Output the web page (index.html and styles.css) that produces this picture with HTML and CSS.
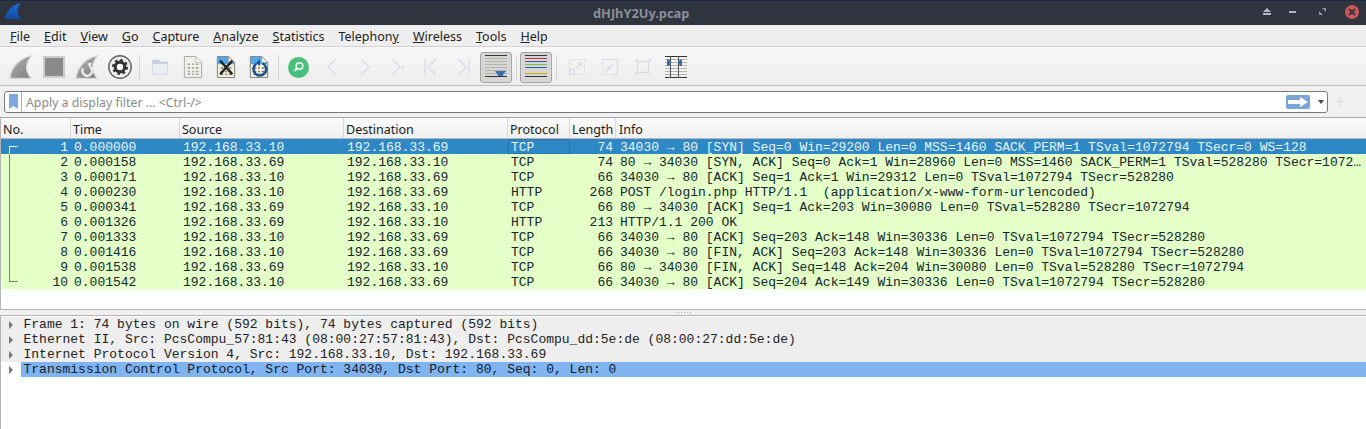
FILE: index.html
```html
<!DOCTYPE html>
<html>
<head>
  <title>dHJhY2Uy.pcap</title>
  <link rel="stylesheet" href="styles.css">
</head>
<body>
  <svg class="sprites" width="0" height="0">
    <defs>
      <linearGradient id="fin" x1="0" y1="0" x2="1" y2="1"><stop offset="0" stop-color="#b2b2b2"/><stop offset="1" stop-color="#7d7d7d"/></linearGradient>
      <linearGradient id="finblue" x1="0" y1="0" x2="0" y2="1"><stop offset="0" stop-color="#1f6fe0"/><stop offset="1" stop-color="#12489c"/></linearGradient>
      <symbol id="doc" viewBox="0 0 22 26">
        <path d="M1.5 1.5H14L20.5 8V24.5H1.5Z" fill="#f1f1ec" stroke="#a0a0a0"/>
        <path d="M14 1.5V8H20.5Z" fill="#fff" stroke="#c0c0c0"/>
        <path d="M5 10h3M10 10h2M14 10h3M5 14h3M10 14h2M14 14h3M5 18h3M10 18h2M14 18h3M5 21h3M10 21h2M14 21h3" stroke="#a5a59c" stroke-width="1.8"/>
      </symbol>
      <symbol id="docblue" viewBox="0 0 22 26">
        <path d="M1.5 1.5H14L20.5 8V24.5H1.5Z" fill="#f2f2d8" stroke="#777"/>
        <path d="M2 2H14V8H20V10H2Z" fill="#55a8e8"/>
        <path d="M14 1.5V8H20.5Z" fill="#fff" stroke="#999"/>
        <path d="M5 14h3M10 14h2M14 14h3M5 18h3M10 18h2M14 18h3M5 21h3M10 21h2M14 21h3" stroke="#77776a" stroke-width="1.6"/>
      </symbol>
    </defs>
  </svg>

  <header class="titlebar">
    <svg class="app-logo" width="17" height="16" viewBox="0 0 17 16">
      <path d="M0 16C1 8 7 2 15.500 0C12 5 11 11 16.500 16Z" fill="url(#finblue)"/>
    </svg>
    <span class="window-title">dHJhY2Uy.pcap</span>
    <div class="window-controls">
      <svg class="ctl-eject" width="8" height="7" viewBox="0 0 8 7"><path d="M4 0L8 4H0Z M0 5H8V7H0Z" fill="#b6bac4"/></svg>
      <span class="ctl-min"></span>
      <svg class="ctl-max" width="7" height="7" viewBox="0 0 7 7"><path d="M3 0H7V4Z M0 3L4 7H0Z" fill="#8f939e"/></svg>
      <span class="ctl-close">
        <svg width="8" height="8" viewBox="0 0 8 8"><path d="M1 1L7 7M7 1L1 7" stroke="#2f343f" stroke-width="1.8"/></svg>
      </span>
    </div>
  </header>

  <nav class="menubar">
    <span><u>F</u>ile</span>
    <span><u>E</u>dit</span>
    <span><u>V</u>iew</span>
    <span><u>G</u>o</span>
    <span><u>C</u>apture</span>
    <span><u>A</u>nalyze</span>
    <span><u>S</u>tatistics</span>
    <span>Telephon<u>y</u></span>
    <span><u>W</u>ireless</span>
    <span><u>T</u>ools</span>
    <span><u>H</u>elp</span>
  </nav>

  <div class="toolbar">
    <div class="tool"><svg width="24" height="24" viewBox="0 0 24 24"><path d="M1 23.500C2 12 11 3 22.500 .8C16.500 8 15.500 16 22.500 23.500Z" fill="url(#fin)" stroke="#d8d8d8" stroke-width="1.300"/></svg></div>
    <div class="tool"><svg width="22" height="22" viewBox="0 0 22 22"><rect x="1" y="1" width="20" height="20" fill="#8a8a8a" stroke="#cdcdcd" stroke-width="2"/></svg></div>
    <div class="tool"><svg width="24" height="24" viewBox="0 0 24 24"><path d="M1 23.500C2 12 11 3 22.500 .8C16.500 8 15.500 16 22.500 23.500Z" fill="url(#fin)" stroke="#d8d8d8" stroke-width="1.300"/><path d="M8 13.500A4.800 4.800 0 1 0 15 12" fill="none" stroke="#eee" stroke-width="2.400"/><path d="M12 8.500l4.500-1-1 6Z" fill="#eee"/></svg></div>
    <div class="tool"><svg width="24" height="24" viewBox="0 0 24 24"><circle cx="12" cy="12" r="11.200" fill="#efefef" stroke="#666" stroke-width="1.400"/><circle cx="12" cy="12" r="4.800" fill="#fff" stroke="#333" stroke-width="3.200"/><circle cx="12" cy="12" r="7" fill="none" stroke="#333" stroke-width="2" stroke-dasharray="2.750 2.750"/></svg></div>
    <div class="sep"></div>
    <div class="tool"><svg width="16" height="16" viewBox="0 0 16 16"><path d="M.5 1H7L8 3H15.500V15.500H.5Z" fill="#e9eef3" stroke="#d3dce6"/><path d="M1 1H7L8 3H15V5H1Z" fill="#c6d1dd"/></svg></div>
    <div class="tool"><svg width="20" height="24" viewBox="0 0 22 26"><use href="#doc"/></svg></div>
    <div class="tool"><svg width="20" height="24" viewBox="0 0 22 26"><use href="#docblue"/><path d="M4.500 6L18 21M18 6L4.500 21" stroke="#222" stroke-width="2.600"/></svg></div>
    <div class="tool"><svg width="20" height="24" viewBox="0 0 22 26"><use href="#docblue"/><path d="M8 9.500A7 7 0 1 0 15 9" fill="none" stroke="#1b4f94" stroke-width="2.800"/><path d="M12 4.500V12L7.500 8.500Z" fill="#1b4f94"/></svg></div>
    <div class="sep"></div>
    <div class="tool"><svg width="21" height="21" viewBox="0 0 21 21"><circle cx="10.500" cy="10.500" r="10.500" fill="#48c07c"/><circle cx="11.500" cy="9" r="3.300" fill="none" stroke="#f2fff6" stroke-width="1.600"/><path d="M9 11.500L6.500 14" stroke="#f2fff6" stroke-width="2"/></svg></div>
    <div class="tool"><svg width="12" height="18" viewBox="0 0 12 18"><path d="M10 1L2 9L10 17" class="dim"/></svg></div>
    <div class="tool"><svg width="12" height="18" viewBox="0 0 12 18"><path d="M2 1L10 9L2 17" class="dim"/></svg></div>
    <div class="tool"><svg width="14" height="18" viewBox="0 0 14 18"><path d="M1 1L9 9L1 17" class="dim"/><rect x="11" y="8" width="2" height="2" fill="#d5dce5"/></svg></div>
    <div class="tool"><svg width="13" height="18" viewBox="0 0 13 18"><path d="M1 1V17M12 1L4 9L12 17" class="dim"/></svg></div>
    <div class="tool"><svg width="13" height="18" viewBox="0 0 13 18"><path d="M12 1V17M1 1L9 9L1 17" class="dim"/></svg></div>
    <div class="tool toggled"><svg width="22" height="22" viewBox="0 0 22 22"><path d="M0 .5H22M0 21.500H22" stroke="#333"/><path d="M0 3.500H22M0 6.500H22M0 9.500H22M0 12.500H22M0 15.500H22M0 18.500H22" stroke="#b4b4a8"/><path d="M10 16H21L18 20V21H13V20Z" fill="#3a6cb0"/></svg></div>
    <div class="sep"></div>
    <div class="tool toggled"><svg width="22" height="22" viewBox="0 0 22 22"><path d="M0 .5H22M0 21.500H22" stroke="#333"/><path d="M0 3.500H22" stroke="#d03030"/><path d="M0 6.500H22" stroke="#2e5fb0"/><path d="M0 9.500H22" stroke="#7fc03a"/><path d="M0 12.500H22" stroke="#2e5fb0"/><path d="M0 18.500H22" stroke="#d4a400"/></svg></div>
    <div class="sep"></div>
    <div class="tool"><svg width="16" height="16" viewBox="0 0 16 16"><rect x=".5" y=".5" width="15" height="15" class="dash"/><rect x=".5" y="10.500" width="5" height="5" class="dim"/><path d="M7 9L12 4M8.500 4H12V7.500" class="dim"/></svg></div>
    <div class="tool"><svg width="16" height="16" viewBox="0 0 16 16"><path d="M.5 7V.5H15.500V15.500H8" class="dim"/><rect x=".5" y="10.500" width="5" height="5" class="dash"/><path d="M11 5L6 10M6 6.500V10H9.500" class="dim"/></svg></div>
    <div class="tool"><svg width="16" height="16" viewBox="0 0 16 16"><rect x="2.500" y="2.500" width="11" height="11" class="dim"/><path d="M.5 3V.5H3M13 .5H15.500V3M15.500 13V15.500H13M3 15.500H.5V13" class="dim"/></svg></div>
    <div class="tool"><svg width="22" height="22" viewBox="0 0 22 22"><path d="M0 .5H22M0 21.500H22" stroke="#333"/><path d="M0 3.500H22M0 6.500H22M0 9.500H22M0 12.500H22M0 15.500H22M0 18.500H22" stroke="#b4b4a8"/><path d="M5.500 0V22M13.500 0V22" stroke="#555"/><path d="M2 3.500H4L6.500 6.500L4 10H2Z M17 3.500H15L13 6.500L15 10H17Z" fill="#3a6cb0"/></svg></div>
  </div>

  <div class="filterbar">
    <div class="filter-input">
      <span class="bookmark"><svg width="9" height="15" viewBox="0 0 9 15"><path d="M0 0H9V15L4.500 12L0 15Z" fill="#7ba7dc"/></svg></span>
      <span class="filter-hint">Apply a display filter ... &lt;Ctrl-/&gt;</span>
      <span class="apply"><svg width="20" height="10" viewBox="0 0 20 10"><path d="M0 3H12V0L20 5L12 10V7H0Z" fill="#fff"/></svg></span>
      <span class="dropdown"></span>
    </div>
    <span class="plus"></span>
  </div>

  <section class="packets">
    <div class="row head">
      <span>No.</span><span>Time</span><span>Source</span><span>Destination</span><span>Protocol</span><span>Length</span><span class="info">Info</span>
    </div>
    <div class="row pkt selected"><span class="no"><i class="tree start"></i>1</span><span>0.000000</span><span>192.168.33.10</span><span>192.168.33.69</span><span class="focus">TCP</span><span class="len">74</span><span class="info">34030 → 80 [SYN] Seq=0 Win=29200 Len=0 MSS=1460 SACK_PERM=1 TSval=1072794 TSecr=0 WS=128</span></div>
    <div class="row pkt"><span class="no"><i class="tree"></i>2</span><span>0.000158</span><span>192.168.33.69</span><span>192.168.33.10</span><span>TCP</span><span class="len">74</span><span class="info">80 → 34030 [SYN, ACK] Seq=0 Ack=1 Win=28960 Len=0 MSS=1460 SACK_PERM=1 TSval=528280 TSecr=1072…</span></div>
    <div class="row pkt"><span class="no"><i class="tree"></i>3</span><span>0.000171</span><span>192.168.33.10</span><span>192.168.33.69</span><span>TCP</span><span class="len">66</span><span class="info">34030 → 80 [ACK] Seq=1 Ack=1 Win=29312 Len=0 TSval=1072794 TSecr=528280</span></div>
    <div class="row pkt"><span class="no"><i class="tree"></i>4</span><span>0.000230</span><span>192.168.33.10</span><span>192.168.33.69</span><span>HTTP</span><span class="len">268</span><span class="info">POST /login.php HTTP/1.1  (application/x-www-form-urlencoded)</span></div>
    <div class="row pkt"><span class="no"><i class="tree"></i>5</span><span>0.000341</span><span>192.168.33.69</span><span>192.168.33.10</span><span>TCP</span><span class="len">66</span><span class="info">80 → 34030 [ACK] Seq=1 Ack=203 Win=30080 Len=0 TSval=528280 TSecr=1072794</span></div>
    <div class="row pkt"><span class="no"><i class="tree"></i>6</span><span>0.001326</span><span>192.168.33.69</span><span>192.168.33.10</span><span>HTTP</span><span class="len">213</span><span class="info">HTTP/1.1 200 OK</span></div>
    <div class="row pkt"><span class="no"><i class="tree"></i>7</span><span>0.001333</span><span>192.168.33.10</span><span>192.168.33.69</span><span>TCP</span><span class="len">66</span><span class="info">34030 → 80 [ACK] Seq=203 Ack=148 Win=30336 Len=0 TSval=1072794 TSecr=528280</span></div>
    <div class="row pkt"><span class="no"><i class="tree"></i>8</span><span>0.001416</span><span>192.168.33.10</span><span>192.168.33.69</span><span>TCP</span><span class="len">66</span><span class="info">34030 → 80 [FIN, ACK] Seq=203 Ack=148 Win=30336 Len=0 TSval=1072794 TSecr=528280</span></div>
    <div class="row pkt"><span class="no"><i class="tree"></i>9</span><span>0.001538</span><span>192.168.33.69</span><span>192.168.33.10</span><span>TCP</span><span class="len">66</span><span class="info">80 → 34030 [FIN, ACK] Seq=148 Ack=204 Win=30080 Len=0 TSval=528280 TSecr=1072794</span></div>
    <div class="row pkt"><span class="no"><i class="tree end"></i>10</span><span>0.001542</span><span>192.168.33.10</span><span>192.168.33.69</span><span>TCP</span><span class="len">66</span><span class="info">34030 → 80 [ACK] Seq=204 Ack=149 Win=30336 Len=0 TSval=1072794 TSecr=528280</span></div>
  </section>

  <div class="splitter"><span class="grip"></span></div>

  <section class="details">
    <div class="detail"><i class="arrow"></i><span class="detail-text">Frame 1: 74 bytes on wire (592 bits), 74 bytes captured (592 bits)</span></div>
    <div class="detail"><i class="arrow"></i><span class="detail-text">Ethernet II, Src: PcsCompu_57:81:43 (08:00:27:57:81:43), Dst: PcsCompu_dd:5e:de (08:00:27:dd:5e:de)</span></div>
    <div class="detail"><i class="arrow"></i><span class="detail-text">Internet Protocol Version 4, Src: 192.168.33.10, Dst: 192.168.33.69</span></div>
    <div class="detail current"><i class="arrow"></i><span class="detail-text">Transmission Control Protocol, Src Port: 34030, Dst Port: 80, Seq: 0, Len: 0</span></div>
  </section>
</body>
</html>
```

FILE: styles.css
```css
html, body {
  margin: 0;
  height: 429px;
  overflow: hidden;
  background: #fff;
}

body {
  display: flex;
  flex-direction: column;
  font-family: "Noto Sans", sans-serif;
  font-size: 12px;
  color: #222;
}

.sprites {
  position: absolute;
}

.titlebar {
  height: 24px;
  flex: none;
  display: flex;
  align-items: center;
  background: #2f343f;
  border-top: 1px solid #1c2a4a;
  padding-left: 5px;
}

.app-logo {
  flex: none;
  margin-bottom: 5px;
}

.window-title {
  margin-left: 571px;
  font-size: 12.8px;
  font-weight: 700;
  color: #8c909a;
}

.window-controls {
  margin-left: auto;
  display: flex;
  align-items: center;
  padding-right: 7px;
  margin-bottom: 3px;
}

.ctl-min {
  width: 7px;
  height: 2px;
  margin-left: 18px;
  background: #b0b4be;
}

.ctl-max {
  margin-left: 23px;
}

.ctl-close {
  width: 14px;
  height: 14px;
  margin-left: 19px;
  border-radius: 50%;
  background: #cc575d;
  display: flex;
  align-items: center;
  justify-content: center;
}

.menubar {
  height: 22px;
  flex: none;
  display: flex;
  align-items: center;
  gap: 14px;
  padding: 2px 0 0 10px;
  background: #eee;
  border-bottom: 1px solid #d2d2d2;
  box-sizing: border-box;
  font-size: 12.5px;
}

.toolbar {
  height: 39px;
  flex: none;
  display: flex;
  align-items: flex-start;
  padding: 4px 0 0 4px;
  box-sizing: border-box;
  background: linear-gradient(#f8f8f8, #ececec);
  border-bottom: 1px solid #c0c0c0;
}

.tool {
  width: 33px;
  height: 32px;
  display: flex;
  align-items: center;
  justify-content: center;
  box-sizing: border-box;
}

.tool.toggled {
  width: 32px;
  height: 31px;
  margin: 1px 1px 0 0;
  padding-top: 2px;
  align-items: flex-start;
  background: #d6d6d6;
  border: 1px solid #a6a6a6;
  border-radius: 3px;
}

.sep {
  width: 7px;
  height: 25px;
  flex: none;
  margin-top: 4px;
  display: flex;
  justify-content: center;
}

.sep::before {
  content: "";
  width: 1px;
  background: #d6d6d6;
}

.dim {
  fill: none;
  stroke: #d5dce5;
  stroke-width: 1.2;
}

.dash {
  fill: none;
  stroke: #d5dce5;
  stroke-width: 1.2;
  stroke-dasharray: 3 2;
}

.filterbar {
  height: 31px;
  flex: none;
  display: flex;
  align-items: center;
  padding: 0 4px;
  box-sizing: border-box;
  background: #f0f0f0;
}

.filter-input {
  flex: none;
  width: 1324px;
  height: 22px;
  box-sizing: border-box;
  display: flex;
  align-items: center;
  background: #fff;
  border: 1px solid #7a7a7a;
  border-radius: 3px;
}

.bookmark {
  width: 17px;
  height: 20px;
  flex: none;
  display: flex;
  align-items: center;
  justify-content: center;
  border-right: 1px solid #b0b0b0;
  box-sizing: border-box;
}

.filter-hint {
  margin: 2px 0 0 4px;
  font-size: 12.3px;
  color: #8a8a8a;
}

.apply {
  margin-left: auto;
  width: 24px;
  height: 14px;
  display: flex;
  align-items: center;
  justify-content: center;
  background: #7aa5d8;
  border-radius: 2px;
}

.dropdown {
  margin: 0 3px 0 8px;
  border-left: 3.5px solid transparent;
  border-right: 3.5px solid transparent;
  border-top: 4px solid #444;
}

.plus {
  width: 10px;
  height: 10px;
  margin-left: 7px;
  background: linear-gradient(#d8d8d8, #d8d8d8) center / 100% 1px no-repeat,
              linear-gradient(#d8d8d8, #d8d8d8) center / 1px 100% no-repeat;
}

.packets {
  height: 193px;
  flex: none;
  box-sizing: border-box;
  border-top: 1px solid #a8a8a8;
  border-left: 1px solid #b4b4b4;
  border-bottom: 1px solid #b4b4b4;
  background: #fff;
  font-family: "Liberation Mono", monospace;
  font-size: 13px;
}

.row {
  display: grid;
  grid-template-columns: 70px 109px 164px 164px 62px 46px 1fr;
  white-space: pre;
}

.head {
  height: 21px;
  align-items: stretch;
  font-family: "Noto Sans", sans-serif;
  font-size: 12.5px;
  background: linear-gradient(#fafafa, #f0f0f0);
  border-bottom: 1px solid #b8b8b8;
  box-sizing: border-box;
}

.head span {
  padding: 3px 0 0 2px;
  border-right: 1px solid #d8d8d8;
}

.head .info {
  padding-left: 3px;
  border-right: 0;
}

.pkt {
  height: 15px;
  line-height: 17px;
  background: #e4ffc7;
  color: #12272e;
}

.pkt span {
  padding-left: 3px;
  overflow: hidden;
}

.pkt.selected {
  background: #2e88c6;
  color: #eaf4fb;
}

.pkt .focus {
  box-shadow: inset 0 0 0 1px #2878ae;
}

.pkt .no,
.pkt .len {
  position: relative;
  text-align: right;
  padding: 0 3px 0 0;
}

.pkt .info {
  padding-left: 4px;
}

.tree {
  position: absolute;
  left: 8px;
  top: 0;
  bottom: 0;
  width: 8px;
  border-left: 1px solid #6a8a6a;
}

.tree.start {
  top: 7px;
  border-top: 1px solid #eaf4fb;
  border-left-color: #eaf4fb;
}

.tree.end {
  bottom: 7px;
  border-bottom: 1px solid #6a8a6a;
}

.splitter {
  height: 6px;
  flex: none;
  box-sizing: border-box;
  border-bottom: 1px solid #b4b4b4;
  background: #f0f0f0;
  display: flex;
  justify-content: center;
  align-items: center;
}

.grip {
  width: 16px;
  height: 1px;
  background: repeating-linear-gradient(90deg, #aaa 0 1px, transparent 1px 3px);
}

.details {
  flex: 1;
  padding-top: 1px;
  border-left: 1px solid #b4b4b4;
  font-family: "Liberation Mono", monospace;
  font-size: 13px;
  background: #fff;
  color: #222;
}

.detail {
  height: 15px;
  line-height: 15px;
  display: flex;
  align-items: center;
  white-space: pre;
  background: #eee;
}

.arrow {
  width: 0;
  height: 0;
  margin-left: 8px;
  border-top: 4px solid transparent;
  border-bottom: 4px solid transparent;
  border-left: 4.5px solid #777;
}

.detail-text {
  flex: 1;
  margin-left: 7.5px;
  padding-left: 3px;
}

.detail.current {
  background: #fff;
}

.detail.current .detail-text {
  background: #7fb4f0;
  color: #10202c;
}
```
